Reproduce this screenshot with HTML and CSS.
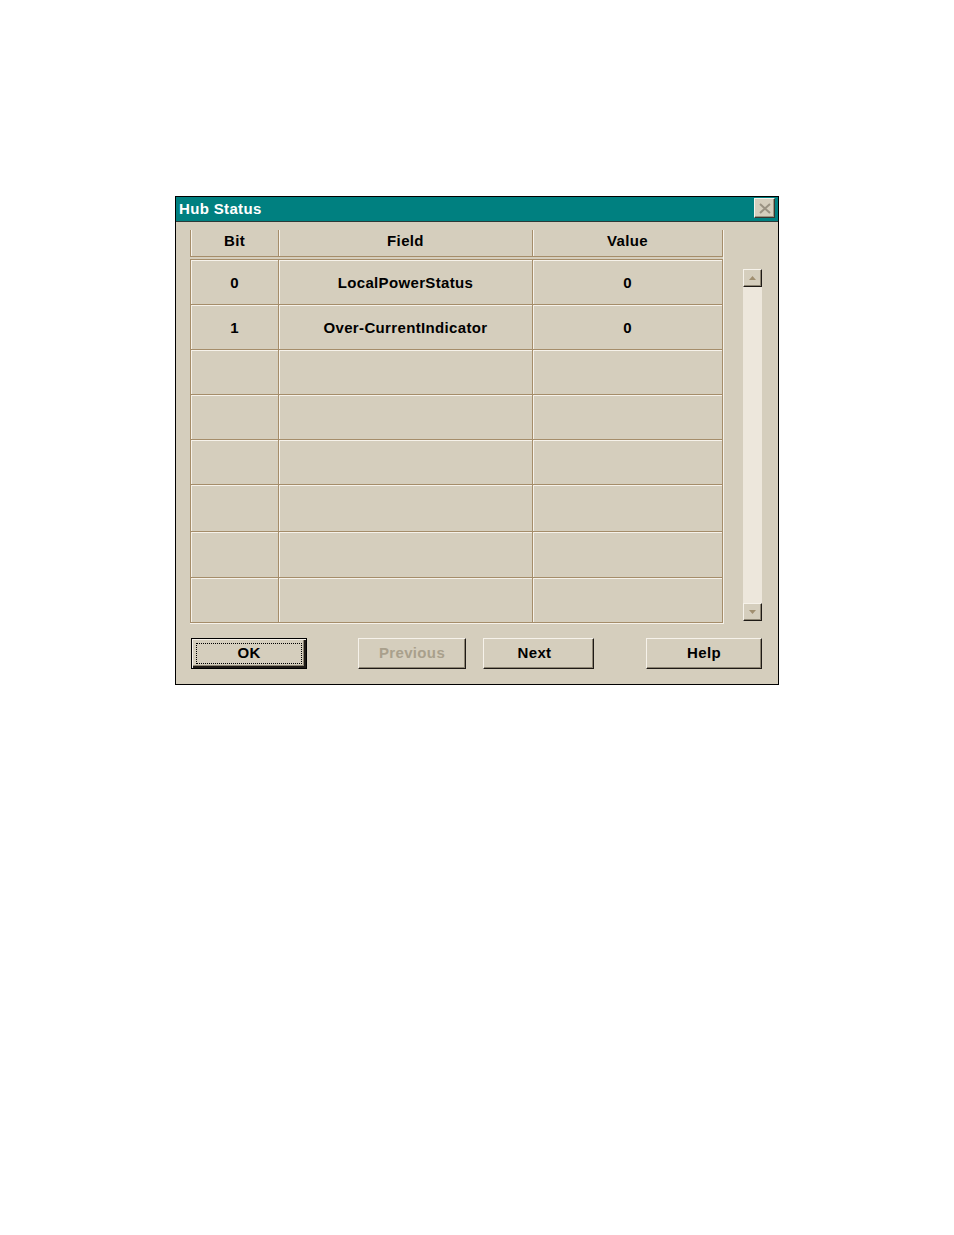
FILE: index.html
```html
<!DOCTYPE html>
<html>
<head>
<meta charset="utf-8">
<link rel="stylesheet" href="styles.css">
</head>
<body>
<div class="window">
  <div class="titlebar">
    <span class="title">Hub Status</span>
    <span class="close"><svg width="12" height="11" viewBox="0 0 12 11"><path d="M1 1 L11 10 M11 1 L1 10" stroke="#9a9282" stroke-width="2" fill="none"/></svg></span>
  </div>
  <div class="client">
    <div class="main">
      <div class="grid">
        <div class="head">
          <div class="hc">Bit</div>
          <div class="hc">Field</div>
          <div class="hc">Value</div>
        </div>
        <div class="rows">
          <div class="row"><div class="c">0</div><div class="c">LocalPowerStatus</div><div class="c">0</div></div>
          <div class="row"><div class="c">1</div><div class="c">Over-CurrentIndicator</div><div class="c">0</div></div>
          <div class="row"><div class="c"></div><div class="c"></div><div class="c"></div></div>
          <div class="row"><div class="c"></div><div class="c"></div><div class="c"></div></div>
          <div class="row"><div class="c"></div><div class="c"></div><div class="c"></div></div>
          <div class="row r6"><div class="c"></div><div class="c"></div><div class="c"></div></div>
          <div class="row r7"><div class="c"></div><div class="c"></div><div class="c"></div></div>
          <div class="row"><div class="c"></div><div class="c"></div><div class="c"></div></div>
        </div>
      </div>
      <div class="scrollbar">
        <div class="sbtn"><svg width="7" height="4" viewBox="0 0 7 4"><path d="M3.5 0 L7 4 L0 4 Z" fill="#a08f70"/></svg></div>
        <div class="track"></div>
        <div class="sbtn"><svg width="7" height="4" viewBox="0 0 7 4"><path d="M0 0 L7 0 L3.5 4 Z" fill="#a08f70"/></svg></div>
      </div>
    </div>
    <div class="buttons">
      <div class="btn btn-ok"><span class="focus">OK</span></div>
      <div class="btn btn-prev disabled">Previous</div>
      <div class="btn btn-next">Next</div>
      <div class="btn btn-help">Help</div>
    </div>
  </div>
</div>
</body>
</html>
```
FILE: styles.css
```css
html, body {
  margin: 0;
  padding: 0;
  background: #ffffff;
}
body {
  font-family: "Liberation Sans", Arial, sans-serif;
  font-weight: bold;
  font-size: 15px;
  letter-spacing: 0.35px;
  color: #000;
}
.window {
  margin: 196px 0 0 175px;
  width: 604px;
  height: 489px;
  box-sizing: border-box;
  border: 1px solid #000;
  background: #d5cebd;
  display: flex;
  flex-direction: column;
}
.titlebar {
  height: 24px;
  background: #008080;
  border-bottom: 1px solid #2b3a38;
  display: flex;
  align-items: flex-start;
  justify-content: space-between;
  flex-shrink: 0;
}
.title {
  color: #fff;
  line-height: 24px;
  padding-left: 3px;
}
.close {
  margin-top: 1px;
  margin-right: 3px;
  width: 21px;
  height: 20px;
  box-sizing: border-box;
  background: #d5cebd;
  border-top: 1px solid #f6f2ea;
  border-left: 1px solid #f6f2ea;
  border-right: 1px solid #3a3630;
  border-bottom: 1px solid #3a3630;
  box-shadow: inset -1px -1px 0 #9c9480;
  display: flex;
  align-items: center;
  justify-content: center;
}
.client {
  padding: 8px 15px 0 14px;
  display: flex;
  flex-direction: column;
}
.main {
  display: flex;
  align-items: flex-start;
}
.grid {
  border-right: 1px solid #f6f2ea;
  border-bottom: 1px solid #f6f2ea;
}
.head, .row {
  display: grid;
  grid-template-columns: 89px 254px 190px;
}
.head {
  height: 27px;
  border-bottom: 1px solid #a58d6a;
  box-sizing: border-box;
}
.hc, .c {
  border-right: 1px solid #a58d6a;
  box-sizing: border-box;
  display: flex;
  align-items: center;
  justify-content: center;
}
.hc {
  box-shadow: inset 1px 0 0 #f6f2ea;
  padding-bottom: 5px;
}
.hc:first-child, .c:first-child {
  border-left: 1px solid #a58d6a;
}
.rows {
  margin-top: 2px;
  border-top: 1px solid #a58d6a;
}
.row {
  height: 45px;
}
.row.r6 { height: 47px; }
.row.r7 { height: 46px; }
.c {
  border-bottom: 1px solid #a58d6a;
  box-shadow: inset 1px 1px 0 #f6f2ea;
}
.scrollbar {
  margin-left: 19px;
  margin-top: 39px;
  width: 19px;
  height: 352px;
  display: flex;
  flex-direction: column;
  background: #ede7dc;
}
.sbtn {
  height: 18px;
  box-sizing: border-box;
  background: #d5cebd;
  border-top: 1px solid #f6f2ea;
  border-left: 1px solid #f6f2ea;
  border-right: 1px solid #1e1a16;
  border-bottom: 1px solid #1e1a16;
  box-shadow: inset -1px -1px 0 #8e8674;
  display: flex;
  align-items: center;
  justify-content: center;
  flex-shrink: 0;
}
.track {
  flex: 1;
}
.buttons {
  margin-top: 14px;
  display: flex;
}
.btn {
  height: 31px;
  box-sizing: border-box;
  background: #d5cebd;
  border-top: 1px solid #f6f2ea;
  border-left: 1px solid #f6f2ea;
  border-right: 1px solid #1e1a16;
  border-bottom: 1px solid #1e1a16;
  box-shadow: inset -1px -1px 0 #8e8674;
  display: flex;
  align-items: center;
  justify-content: center;
}
.btn-ok {
  width: 116px;
  margin-left: 1px;
  border: 1px solid #000;
  box-shadow: inset 1px 1px 0 #f6f2ea, inset -2px -2px 0 #1e1a16, inset -3px -3px 0 #8e8674;
  padding: 4px 4px 4px 4px;
}
.focus {
  flex: 1;
  align-self: stretch;
  border: 1px dotted #000;
  display: flex;
  align-items: center;
  justify-content: center;
  padding-bottom: 3px;
  box-sizing: border-box;
}
.btn-prev {
  width: 108px;
  margin-left: 51px;
}
.btn-next {
  width: 111px;
  margin-left: 17px;
  padding-right: 8px;
}
.btn-help {
  width: 116px;
  margin-left: 52px;
}
.btn-prev, .btn-next, .btn-help {
  padding-bottom: 2px;
}
.disabled {
  color: #a9a08c;
}
```
